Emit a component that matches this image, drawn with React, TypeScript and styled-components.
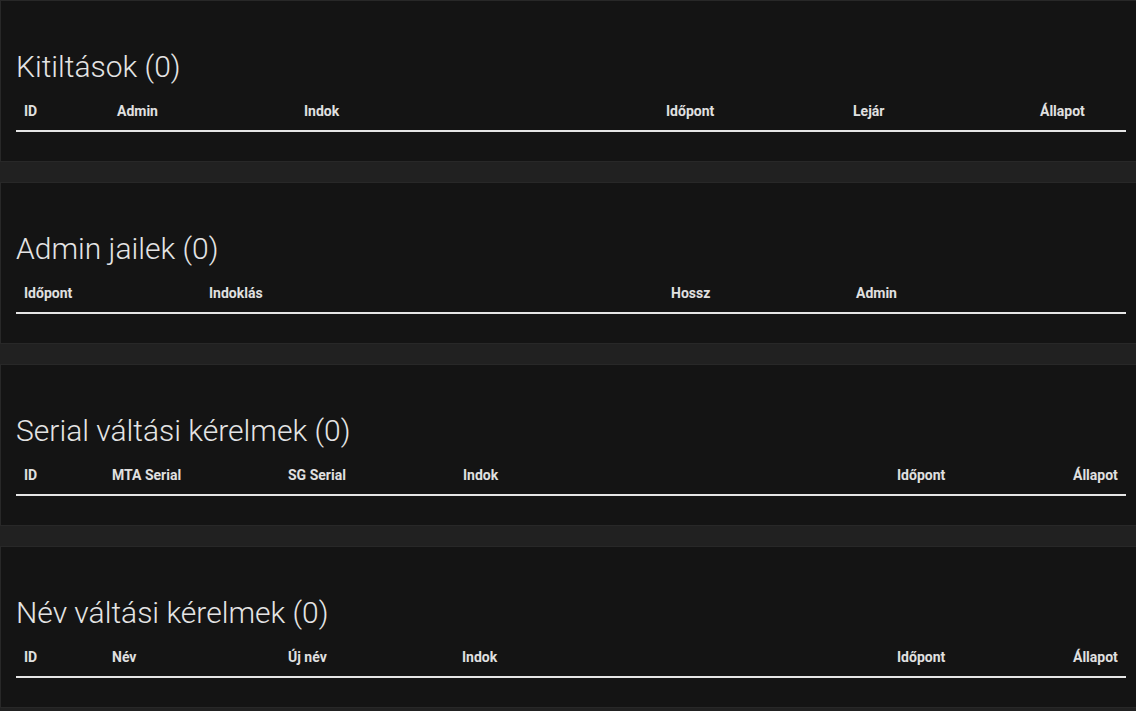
import styled, { createGlobalStyle } from "styled-components";

const GlobalStyle = createGlobalStyle`
  body {
    margin: 0;
    background: #212121;
    font-family: Roboto, "Liberation Sans", sans-serif;
    color: #e2e2e2;
  }
`;

interface Column {
  label: string;
  width: number;
}

interface Section {
  title: string;
  columns: Column[];
}

const sections: Section[] = [
  {
    title: "Kitiltások (0)",
    columns: [
      { label: "ID", width: 93 },
      { label: "Admin", width: 187 },
      { label: "Indok", width: 362 },
      { label: "Időpont", width: 187 },
      { label: "Lejár", width: 187 },
      { label: "Állapot", width: 94 },
    ],
  },
  {
    title: "Admin jailek (0)",
    columns: [
      { label: "Időpont", width: 185 },
      { label: "Indoklás", width: 462 },
      { label: "Hossz", width: 185 },
      { label: "Admin", width: 278 },
    ],
  },
  {
    title: "Serial váltási kérelmek (0)",
    columns: [
      { label: "ID", width: 88 },
      { label: "MTA Serial", width: 176 },
      { label: "SG Serial", width: 175 },
      { label: "Indok", width: 434 },
      { label: "Időpont", width: 176 },
      { label: "Állapot", width: 61 },
    ],
  },
  {
    title: "Név váltási kérelmek (0)",
    columns: [
      { label: "ID", width: 88 },
      { label: "Név", width: 176 },
      { label: "Új név", width: 174 },
      { label: "Indok", width: 435 },
      { label: "Időpont", width: 176 },
      { label: "Állapot", width: 61 },
    ],
  },
];

const Page = styled.main`
  display: flex;
  flex-direction: column;
  gap: 20px;
`;

const Panel = styled.section`
  background: #141414;
  border: 1px solid #282828;
  border-right: none;
  padding: 48px 10px 29px 15px;
`;

const Title = styled.h2`
  margin: 0 0 9px;
  font-size: 30px;
  line-height: 35px;
  font-weight: 300;
  color: #e4e4e4;
`;

const Table = styled.table`
  width: 100%;
  border-collapse: collapse;
  table-layout: fixed;
`;

const HeadRow = styled.tr`
  border-bottom: 2px solid #e6e6e6;
`;

const HeadCell = styled.th`
  padding: 10px 8px 11px;
  text-align: left;
  font-size: 14px;
  line-height: 16px;
  font-weight: 700;
  color: #e0e0e0;
  white-space: nowrap;
`;

export default function App() {
  return (
    <>
      <GlobalStyle />
      <Page>
        {sections.map((s) => (
          <Panel key={s.title}>
            <Title>{s.title}</Title>
            <Table>
              <colgroup>
                {s.columns.map((c) => (
                  <col key={c.label} style={{ width: c.width }} />
                ))}
              </colgroup>
              <thead>
                <HeadRow>
                  {s.columns.map((c) => (
                    <HeadCell key={c.label}>{c.label}</HeadCell>
                  ))}
                </HeadRow>
              </thead>
            </Table>
          </Panel>
        ))}
      </Page>
    </>
  );
}
